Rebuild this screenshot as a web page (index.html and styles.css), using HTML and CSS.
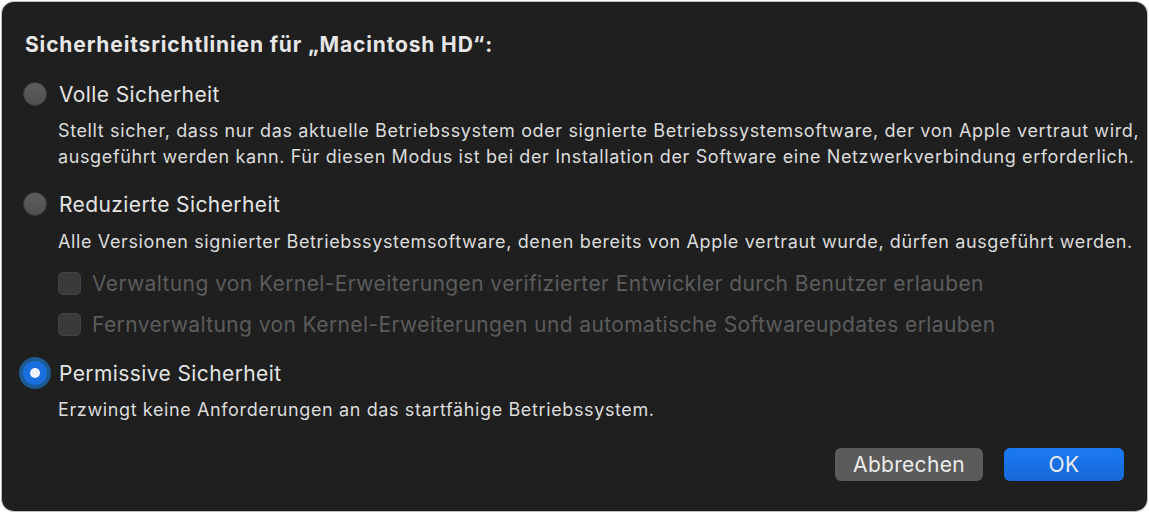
FILE: index.html
```html
<!DOCTYPE html>
<html lang="de">
<head>
    <meta charset="UTF-8">
    <meta name="viewport" content="width=device-width, initial-scale=1.0">
    <title>Sicherheitsrichtlinien</title>
    <link rel="stylesheet" href="styles.css">
</head>
<body>
    <div class="window">
        <h1 class="title">Sicherheitsrichtlinien für „Macintosh HD“:</h1>

        <div class="option option-first">
            <span class="radio"></span>
            <span class="option-label">Volle Sicherheit</span>
        </div>
        <p class="desc desc-first">Stellt sicher, dass nur das aktuelle Betriebssystem oder signierte Betriebssystemsoftware, der von Apple vertraut wird,<br>ausgeführt werden kann. Für diesen Modus ist bei der Installation der Software eine Netzwerkverbindung erforderlich.</p>

        <div class="option option-second">
            <span class="radio"></span>
            <span class="option-label">Reduzierte Sicherheit</span>
        </div>
        <p class="desc desc-second">Alle Versionen signierter Betriebssystemsoftware, denen bereits von Apple vertraut wurde, dürfen ausgeführt werden.</p>

        <div class="check check-first">
            <span class="box"></span>
            <span class="check-label">Verwaltung von Kernel-Erweiterungen verifizierter Entwickler durch Benutzer erlauben</span>
        </div>
        <div class="check check-second">
            <span class="box"></span>
            <span class="check-label">Fernverwaltung von Kernel-Erweiterungen und automatische Softwareupdates erlauben</span>
        </div>

        <div class="option option-third">
            <span class="radio radio-on"><span class="dot"></span></span>
            <span class="option-label">Permissive Sicherheit</span>
        </div>
        <p class="desc desc-third">Erzwingt keine Anforderungen an das startfähige Betriebssystem.</p>

        <div class="buttons">
            <button class="btn btn-cancel">Abbrechen</button>
            <button class="btn btn-ok">OK</button>
        </div>
    </div>
</body>
</html>
```

FILE: styles.css
```css
body {
    margin: 0;
    background-color: #ffffff;
    font-family: Inter, "Noto Sans", sans-serif;
    color: #e2e2e2;
}
.window {
    box-sizing: border-box;
    width: 1145px;
    height: 509px;
    margin: 2px;
    padding: 31px 23px 0 21px;
    background-color: #1f1f1f;
    border-radius: 12px;
    box-shadow: 0 0 0 1px #bdbdbd;
    display: flex;
    flex-direction: column;
}
.title {
    margin: 0 0 0 2px;
    font-size: 21px;
    line-height: 24px;
    font-weight: 700;
    letter-spacing: 0.85px;
    color: #e6e6e6;
}
.option {
    display: flex;
    align-items: center;
    height: 28px;
}
.option-first {
    margin-top: 23px;
}
.option-second {
    margin-top: 20px;
}
.option-third {
    margin-top: 21px;
}
.radio {
    box-sizing: border-box;
    width: 24px;
    height: 24px;
    border-radius: 50%;
    background: linear-gradient(#5e5e5e, #4f4f4f);
    border: 1px solid #3a3a3a;
    margin-right: 12px;
    display: flex;
    align-items: center;
    justify-content: center;
}
.radio-on {
    background: #1a6fe0;
    border: none;
    box-shadow: 0 0 0 4px #1c5a94;
}
.dot {
    width: 10px;
    height: 10px;
    border-radius: 50%;
    background-color: #eef3ff;
}
.option-label {
    font-size: 21px;
    letter-spacing: 0.4px;
    color: #e4e4e4;
}
.desc {
    margin: 10px 0 0 35px;
    font-size: 18px;
    line-height: 26px;
    letter-spacing: 0.62px;
    white-space: nowrap;
    color: #dcdcdc;
}
.desc-second {
    margin-top: 11px;
}
.check {
    display: flex;
    align-items: center;
    height: 28px;
    margin-left: 35px;
}
.check-first {
    margin-top: 14px;
}
.check-second {
    margin-top: 13px;
}
.box {
    box-sizing: border-box;
    width: 23px;
    height: 23px;
    border-radius: 5px;
    background-color: #3a3a3a;
    border: 1px solid #444444;
    margin-right: 11px;
}
.check-label {
    font-size: 21px;
    letter-spacing: 0.4px;
    color: #5c5c5c;
}
.buttons {
    display: flex;
    justify-content: flex-end;
    gap: 21px;
    margin-top: 25px;
}
.btn {
    height: 33px;
    border: none;
    border-radius: 6px;
    font-family: Inter, "Noto Sans", sans-serif;
    font-size: 21px;
    letter-spacing: 0.3px;
    color: #ececec;
}
.btn-cancel {
    width: 148px;
    background-color: #5b5b5b;
}
.btn-ok {
    width: 120px;
    background: linear-gradient(#1b7af0, #1668d9);
}
```
